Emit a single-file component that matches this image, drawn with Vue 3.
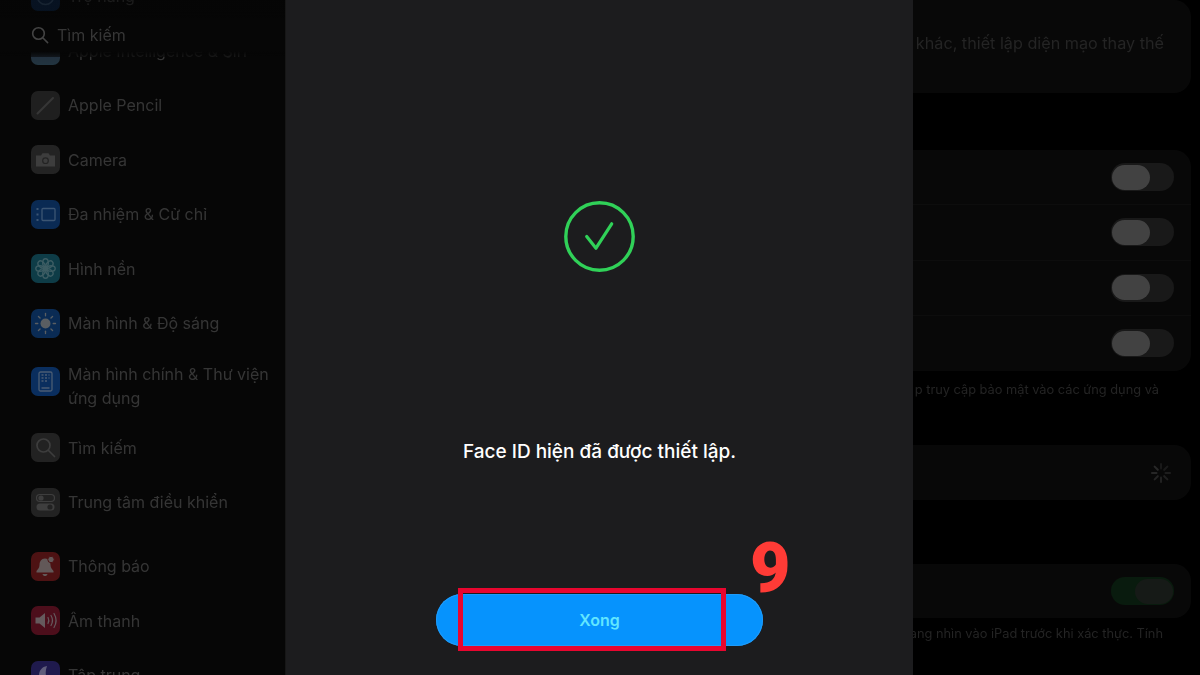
<script setup>
const groups = [
  { cls: 'g1', rows: [
    { t: 'Trợ năng', c: '#0b2c55', i: 'access' },
    { t: 'Apple Intelligence & Siri', c: 'linear-gradient(#2a2a44, #2a4250)', i: 'none' },
    { t: 'Apple Pencil', c: '#272727', i: 'pencil' },
    { t: 'Camera', c: '#2c2c2c', i: 'camera' },
    { t: 'Đa nhiệm & Cử chỉ', c: '#0c3468', i: 'multi' },
    { t: 'Hình nền', c: '#124b59', i: 'flower' },
    { t: 'Màn hình & Độ sáng', c: '#0c3669', i: 'sun' },
    { t: 'Màn hình chính & Thư viện ứng dụng', c: '#0c3a75', i: 'home', tall: true },
    { t: 'Tìm kiếm', c: '#2b2b2b', i: 'search' },
    { t: 'Trung tâm điều khiển', c: '#2b2b2b', i: 'switch' }
  ] },
  { cls: 'g2', rows: [
    { t: 'Thông báo', c: '#601718', i: 'bell' },
    { t: 'Âm thanh', c: '#5f1122', i: 'sound' },
    { t: 'Tập trung', c: '#272060', i: 'moon' }
  ] }
]
const spokes = Array.from({ length: 8 }, (_, k) => k * 45)
</script>

<template>
  <div class="screen">
    <aside class="side">
      <div class="search-overlay">
        <svg width="18" height="18" viewBox="0 0 18 18" fill="none" stroke="#444" stroke-width="1.6" stroke-linecap="round"><circle cx="7.5" cy="7.5" r="5.8"/><path d="M12 12l4.6 4.6"/></svg>
        <span>Tìm kiếm</span>
      </div>
      <div class="list">
        <div v-for="g in groups" :key="g.cls" :class="['group', g.cls]">
          <div v-for="r in g.rows" :key="r.t" :class="['row', { tall: r.tall }]">
            <div class="ico" :style="{ background: r.c }">
              <svg width="29" height="29" viewBox="0 0 29 29" fill="none">
                <path v-if="r.i === 'pencil'" d="M6.500 22.500L22 7" stroke="#444" stroke-width="2" stroke-linecap="round"/>
                <g v-else-if="r.i === 'camera'">
                  <path d="M5 10.500h5l1.500-2.200h6L19 10.500h5v11H5z" fill="#4c4c4c"/>
                  <circle cx="14.500" cy="15.700" r="3.400" fill="#2c2c2c"/>
                  <circle cx="14.500" cy="15.700" r="2.200" fill="#4c4c4c"/>
                </g>
                <g v-else-if="r.i === 'multi'" stroke="#4a6a90">
                  <rect x="11" y="8.500" width="13" height="12" rx="1" stroke-width="1.300"/>
                  <path d="M5.500 9h2M5.500 14.500h2M5.500 20h2" stroke-width="2"/>
                </g>
                <g v-else-if="r.i === 'flower'" fill="none" stroke="#4c747c" stroke-width="1.400">
                  <ellipse v-for="a in spokes" :key="a" cx="14.500" cy="8.800" rx="2.800" ry="4" :transform="`rotate(${a} 14.500 14.500)`"/>
                  <circle cx="14.500" cy="14.500" r="2" fill="#4c747c"/>
                </g>
                <g v-else-if="r.i === 'sun'" stroke="#70767b" stroke-width="1.300" stroke-linecap="round">
                  <circle cx="14.500" cy="14.500" r="5" fill="#70767b" stroke="none"/>
                  <path v-for="a in spokes" :key="a" d="M14.500 4.500v2.300" :transform="`rotate(${a} 14.500 14.500)`"/>
                </g>
                <g v-else-if="r.i === 'home'">
                  <rect x="8" y="5" width="13" height="19" rx="1.500" stroke="#5d7390" stroke-width="1.300"/>
                  <path d="M10.500 8h2M14 8h2M17.500 8h1M10.500 11h2M14 11h2M17.500 11h1M10.500 14h2M14 14h2M10.500 21h8" stroke="#5d7390" stroke-width="1.300"/>
                </g>
                <g v-else-if="r.i === 'search'" stroke="#4c4c4c" stroke-width="1.700" stroke-linecap="round">
                  <circle cx="12.500" cy="12.500" r="6.500"/><path d="M17.500 17.500l6 6"/>
                </g>
                <g v-else-if="r.i === 'switch'">
                  <rect x="5.500" y="6.500" width="18" height="7" rx="3.500" stroke="#4e4e4e" stroke-width="1.200"/>
                  <circle cx="10" cy="10" r="2.600" fill="#4e4e4e"/>
                  <rect x="5.500" y="15.500" width="18" height="7" rx="3.500" fill="#4e4e4e"/>
                  <circle cx="19" cy="19" r="2.600" fill="#2b2b2b"/>
                </g>
                <g v-else-if="r.i === 'bell'" fill="#7a6e6e">
                  <path d="M14 6.500c-3.800 0-5.500 3-5.500 6.500 0 3-1.800 4.500-3 6v1.500h17V19c-1.200-1.500-3-3-3-6 0-3.500-1.700-6.500-5.500-6.500z"/>
                  <path d="M11.500 22h5c-.4 1.400-1.300 2-2.500 2s-2.100-.6-2.500-2z"/>
                  <circle cx="20" cy="7.500" r="3.200" stroke="#601718" stroke-width="1"/>
                </g>
                <g v-else-if="r.i === 'sound'">
                  <path d="M4.500 11.500h4l5.500-4.500v15l-5.500-4.500h-4z" fill="#7e7074"/>
                  <path d="M17 11.500c1 1.800 1 4.200 0 6M20 9.500c1.800 3 1.800 7 0 10M23 7.500c2.500 4.200 2.500 9.800 0 14" stroke="#7e7074" stroke-width="1.200" stroke-linecap="round"/>
                </g>
                <path v-else-if="r.i === 'moon'" d="M16 5c-5 .8-8 4.500-8 9.500 0 5.500 4.300 9.500 9.500 9.500 2.300 0 4-.6 5.500-1.800-6.500.3-10.500-8-7-17.200z" fill="#77749a"/>
                <circle v-else-if="r.i === 'access'" cx="14.500" cy="14.500" r="8" stroke="#3a5a80" stroke-width="1.500"/>
              </svg>
            </div>
            <span class="label">{{ r.t }}</span>
          </div>
        </div>
      </div>
    </aside>

    <main class="modal">
      <svg class="check" width="72" height="72" viewBox="0 0 72 72" fill="none" stroke="#30d158" stroke-linecap="round" stroke-linejoin="round">
        <circle cx="35.500" cy="35.500" r="33.700" stroke-width="3.400"/>
        <path d="M22.700 35.500L32 47.200L47.700 22.800" stroke-width="3.200"/>
      </svg>
      <p class="done">Face ID hiện đã được thiết lập.</p>
      <button class="btn">Xong</button>
      <div class="mark"></div>
      <span class="step">9</span>
    </main>

    <section class="pane">
      <div class="card c1"><span class="dim">khác, thiết lập diện mạo thay thế</span></div>
      <div class="card c2">
        <div v-for="n in 4" :key="n" class="trow"><span class="tog"><span class="knob"></span></span></div>
      </div>
      <p class="note n1">p truy cập bảo mật vào các ứng dụng và</p>
      <div class="card c3">
        <svg width="22" height="22" viewBox="0 0 22 22" stroke="#303030" stroke-width="2" stroke-linecap="round">
          <path v-for="(a, k) in spokes" :key="a" d="M11 2v4.500" :opacity="0.5 + k * 0.07" :transform="`rotate(${a} 11 11)`"/>
        </svg>
      </div>
      <div class="card c4"><span class="tog on"><span class="knob"></span></span></div>
      <p class="note n2">ang nhìn vào iPad trước khi xác thực. Tính</p>
    </section>
  </div>
</template>

<style>
html, body { margin: 0; background: #000; }
</style>

<style scoped>
.screen {
  width: 1200px;
  height: 675px;
  display: flex;
  overflow: hidden;
  background: #000;
  font-family: Inter, "Liberation Sans", sans-serif;
}
.side {
  width: 285px;
  height: 675px;
  flex: none;
  position: relative;
  overflow: hidden;
  background: #060606;
  border-right: 1px solid #161616;
  box-sizing: content-box;
}
.search-overlay {
  position: absolute;
  left: 0;
  top: 0;
  width: 285px;
  height: 57px;
  padding: 25px 0 0 31px;
  box-sizing: border-box;
  display: flex;
  align-items: flex-start;
  gap: 8px;
  background: linear-gradient(rgba(6, 6, 6, .55) 10px, #060606 18px, #060606 90%, rgba(6, 6, 6, .6));
  z-index: 1;
  color: #363636;
  font-size: 16px;
  line-height: 20px;
  filter: blur(.5px);
}
.search-overlay svg { margin-top: 1px; }
.list {
  margin-top: -31px;
  padding-left: 31px;
  filter: blur(.6px) brightness(.8);
}
.group.g2 { margin-top: 9.500px; }
.row {
  height: 54.500px;
  display: flex;
  align-items: center;
  gap: 8px;
}
.row.tall { height: 70px; }
.ico {
  width: 29px;
  height: 29px;
  border-radius: 7px;
  flex: none;
}
.ico svg { display: block; }
.tall .ico { margin-top: -9px; }
.label {
  width: 210px;
  color: #424242;
  font-size: 16px;
  line-height: 24px;
}
.modal {
  width: 627px;
  height: 675px;
  flex: none;
  position: relative;
  display: flex;
  flex-direction: column;
  align-items: center;
  background: #1c1c1e;
}
.check { margin-top: 201px; }
.done {
  margin: 165px 0 0;
  color: #fff;
  font-size: 19px;
  line-height: 28px;
  font-weight: 500;
  white-space: nowrap;
}
.btn {
  width: 327px;
  height: 52px;
  margin-top: auto;
  margin-bottom: 29px;
  border: 0;
  border-radius: 26px;
  background: #0693fd;
  box-shadow: inset 0 0 0 1px #1f9bf9;
  color: #62e6ff;
  font: 600 16px Inter, "Liberation Sans", sans-serif;
}
.mark {
  position: absolute;
  left: 172px;
  top: 588px;
  width: 268px;
  height: 63px;
  box-sizing: border-box;
  border: 5px solid #e8062f;
}
.step {
  position: absolute;
  left: 464px;
  top: 526px;
  color: #ff3b36;
  font-size: 70px;
  line-height: 84px;
  font-weight: 900;
  font-family: Roboto, sans-serif;
}
.pane {
  flex: 1;
  min-width: 0;
  height: 675px;
  overflow: hidden;
  display: flex;
  flex-direction: column;
  padding-right: 9px;
  color: #2a2a2a;
  filter: blur(.6px) brightness(.85);
}
.card {
  background: #0a0a0a;
  border-radius: 0 17px 17px 0;
  display: flex;
  justify-content: flex-end;
  align-items: center;
  padding-right: 17px;
}
.c1 { height: 93px; align-items: flex-start; }
.dim {
  margin-top: 33px;
  margin-right: 10px;
  font-size: 16.200px;
  line-height: 20px;
  white-space: nowrap;
}
.c2 {
  margin-top: 57px;
  height: 221px;
  display: block;
  padding-right: 0;
}
.trow {
  height: 55.250px;
  box-sizing: border-box;
  padding-right: 17px;
  display: flex;
  justify-content: flex-end;
  align-items: center;
  border-bottom: 1px solid #0f0f0f;
}
.trow:last-child { border-bottom: 0; }
.tog {
  width: 63px;
  height: 28px;
  border-radius: 14px;
  background: #1d1d1d;
  display: flex;
  align-items: center;
  padding: 0 1px;
  box-sizing: border-box;
}
.knob {
  width: 38px;
  height: 25px;
  border-radius: 13px;
  background: #4e4e4e;
}
.tog.on {
  background: #0b2010;
  justify-content: flex-end;
}
.tog.on .knob { background: #1a1e1b; }
.note {
  margin: 0;
  padding-right: 32px;
  white-space: nowrap;
  font-size: 12.800px;
  line-height: 16px;
  color: #2a2a2a;
  display: flex;
  justify-content: flex-end;
}
.n1 { margin-top: 11px; }
.c3 {
  margin-top: 47px;
  height: 55px;
  padding-right: 19px;
}
.c3 svg { display: block; }
.c4 { margin-top: 64px; height: 54px; }
.n2 { margin-top: 8px; padding-right: 28px; }
</style>
